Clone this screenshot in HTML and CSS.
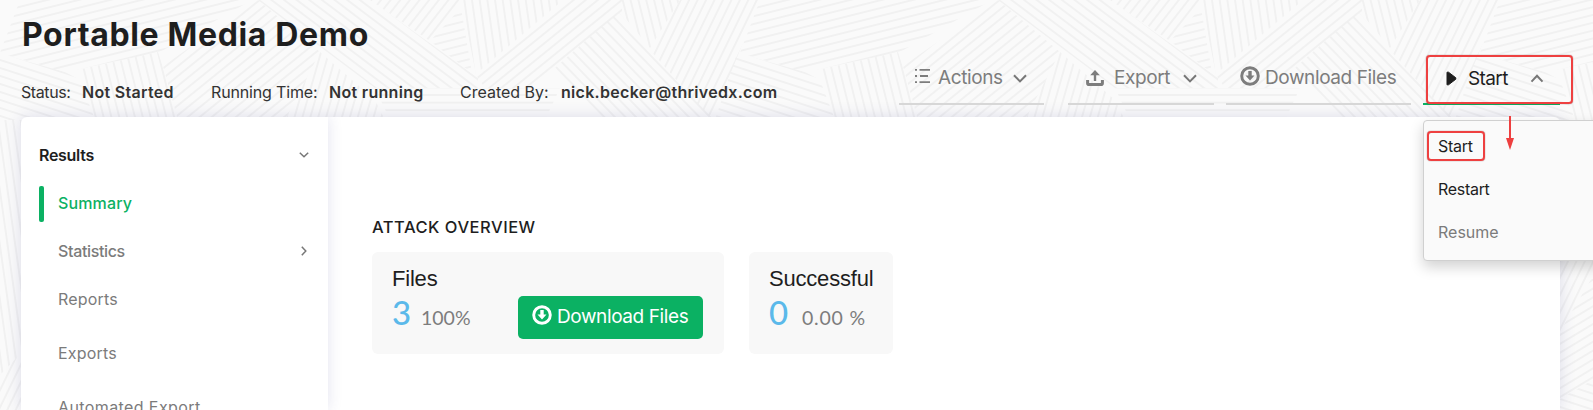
FILE: index.html
```html
<!DOCTYPE html>
<html lang="en">
<head>
<meta charset="utf-8">
<title>Portable Media Demo</title>
<link rel="stylesheet" href="styles.css">
</head>
<body>
<svg class="backdrop" width="1593" height="410" aria-hidden="true">
  <defs>
    <pattern id="h" width="20" height="7.6" patternUnits="userSpaceOnUse"><path d="M0 3.8H20"/></pattern>
    <pattern id="n15" href="#h" patternTransform="rotate(-14)"/>
    <pattern id="p17" href="#h" patternTransform="rotate(18)"/>
    <pattern id="p75" href="#h" patternTransform="rotate(76)"/>
    <pattern id="n40" href="#h" patternTransform="rotate(-39)"/>
    <pattern id="p38" href="#h" patternTransform="rotate(37)"/>
    <pattern id="n50" href="#h" patternTransform="rotate(-52)"/>
    <pattern id="p82" href="#h" patternTransform="rotate(82)"/>
    <pattern id="p45" href="#h" patternTransform="rotate(46)"/>
    <pattern id="n65" href="#h" patternTransform="rotate(-64)"/>
    <pattern id="n75" href="#h" patternTransform="rotate(-74)"/>
    <pattern id="n30" href="#h" patternTransform="rotate(-31)"/>
    <g id="tile">
      <path fill="url(#n15)" d="M20 0H252L160 52L65 72L0 53Z"/>
      <path fill="url(#p17)" d="M-3 53L65 72L80 80L95 120H-25Z"/>
      <path fill="url(#p75)" d="M78 70L158 52L180 120H92Z"/>
      <path fill="url(#n40)" d="M163 66L258 0L320 52L285 120H178Z"/>
      <path fill="url(#p38)" d="M258 0H370L478 78V88H375Z"/>
      <path fill="url(#n50)" d="M370 0H461L430 41Z"/>
      <path fill="url(#n15)" d="M430 41L461 8L472 73Z"/>
      <path fill="url(#p82)" d="M461 0H563L476 74Z"/>
      <path fill="url(#n40)" d="M476 75L565 0H622V12L533 88H485Z"/>
      <path fill="url(#p75)" d="M622 0H680L650 48L622 14Z"/>
      <path fill="url(#p45)" d="M555 68L618 12L715 120H600Z"/>
      <path fill="url(#n65)" d="M680 0H760L712 120L650 50Z"/>
      <path fill="url(#h)" d="M375 88H560L545 120H390Z"/>
      <path fill="url(#n75)" d="M285 120L320 52L375 100L385 120Z"/>
    </g>
  </defs>
  <use href="#tile"/><use href="#tile" x="740"/><use href="#tile" x="1480"/>
  <path fill="url(#p82)" d="M0 120H24V350L0 375Z"/>
  <path fill="url(#n65)" d="M0 375L24 350V410H0Z"/>
  <path fill="url(#n65)" d="M1558 120H1593V276L1558 335Z"/>
  <path fill="url(#n30)" d="M1558 335L1593 276V380L1558 400Z"/>
  <path fill="url(#p17)" d="M1558 400L1593 380V410H1558Z"/>
</svg>

<header class="header">
  <div class="heading">
    <h1 class="title">Portable Media Demo</h1>
    <div class="meta">
      <div class="pair pair-status"><span class="label">Status:</span><b>Not Started</b></div>
      <div class="pair pair-time"><span class="label">Running Time:</span><b>Not running</b></div>
      <div class="pair pair-author"><span class="label">Created By:</span><b>nick.becker@thrivedx.com</b></div>
    </div>
  </div>
  <nav class="toolbar">
    <button class="tool tool-actions">
      <svg class="list" width="16" height="16" viewBox="0 0 16 16" stroke="currentColor" stroke-width="1.8" fill="none"><path d="M0 1.8H2M4.500 1.800H15M0 8H2M5 8H13M0 14.200H2M4.500 14.200H15"/></svg>
      <span>Actions</span>
      <svg class="chev" width="14" height="9" viewBox="0 0 14 9"><path d="M1 1.200L7 7.400L13 1.200"/></svg>
    </button>
    <button class="tool tool-export">
      <svg width="18" height="17" viewBox="0 0 18 17" fill="none" stroke="currentColor"><path stroke-width="2.400" d="M9 11V3"/><path fill="currentColor" stroke="none" d="M9 0L13.800 5.200H4.200Z"/><path stroke-width="3" d="M1.600 10V13.200Q1.600 14.500 3 14.500H15Q16.400 14.500 16.400 13.200V10"/></svg>
      <span>Export</span>
      <svg class="chev" width="14" height="9" viewBox="0 0 14 9"><path d="M1 1.200L7 7.400L13 1.200"/></svg>
    </button>
    <button class="tool tool-download">
      <svg class="ring" width="20" height="20" viewBox="0 0 20 20"><circle cx="10" cy="10" r="8.300" fill="none" stroke="currentColor" stroke-width="2.900"/><path fill="currentColor" d="M8.300 5H11.700V9.500H14.500L10 14.500L5.500 9.500H8.300Z"/></svg>
      <span>Download Files</span>
    </button>
    <button class="tool tool-start">
      <svg width="11" height="15" viewBox="0 0 11 15"><path fill="currentColor" stroke="currentColor" stroke-linejoin="round" d="M1 1.200H2.500L9.800 6.800V8.200L2.500 13.800H1Z"/></svg>
      <span>Start</span>
      <svg class="chev" width="14" height="9" viewBox="0 0 14 9"><path d="M1.500 7.600L7 1.700L12.500 7.600"/></svg>
    </button>
  </nav>
</header>

<main class="panel">
  <aside class="sidebar">
    <div class="group"><span>Results</span><svg class="mini" width="10" height="6" viewBox="0 0 10 6"><path d="M.8.800L5 4.800L9.200.800"/></svg></div>
    <a class="item active"><span>Summary</span></a>
    <a class="item stats"><span>Statistics</span><svg class="mini" width="6" height="10" viewBox="0 0 6 10"><path d="M.8.800L4.800 5L.8 9.200"/></svg></a>
    <a class="item"><span>Reports</span></a>
    <a class="item tall"><span>Exports</span></a>
    <a class="item tall auto"><span>Automated Export</span></a>
  </aside>
  <section class="content">
    <h2 class="section-title">ATTACK OVERVIEW</h2>
    <div class="cards">
      <div class="card card-files">
        <div>
          <div class="card-name name-files">Files</div>
          <div class="figures"><span class="count">3</span><span class="percent">100%</span></div>
        </div>
        <button class="primary">
          <svg class="ring" width="20" height="20" viewBox="0 0 20 20"><circle cx="10" cy="10" r="8.300" fill="none" stroke="currentColor" stroke-width="2.900"/><path fill="currentColor" d="M8.300 5H11.700V9.500H14.500L10 14.500L5.500 9.500H8.300Z"/></svg>
          <span>Download Files</span>
        </button>
      </div>
      <div class="card card-success">
        <div class="card-name">Successful</div>
        <div class="figures"><span class="count zero">0</span><span class="percent decimal">0.00 %</span></div>
      </div>
    </div>
  </section>
</main>

<div class="menu">
  <a class="option">Start</a>
  <a class="option restart">Restart</a>
  <a class="option resume">Resume</a>
</div>
<div class="mark mark-button"></div>
<div class="mark mark-option"></div>
<svg class="arrow" width="10" height="36" viewBox="0 0 10 36"><path stroke="#ee3f3f" stroke-width="2" d="M5 0V24"/><path fill="#ee3f3f" d="M1 22H9L5 34Z"/></svg>
</body>
</html>
```

FILE: styles.css
```css
* { box-sizing: border-box; }
html, body { margin: 0; height: 410px; overflow: hidden; }
body { position: relative; background: #fafafa; font-family: Inter, sans-serif; color: #1e1e1e; white-space: nowrap; }
button { font: inherit; color: inherit; letter-spacing: inherit; background: none; border: 0; padding: 0; margin: 0; white-space: nowrap; }
svg { display: block; flex: none; }
.backdrop { position: absolute; left: 0; top: 0; z-index: -1; }
.backdrop pattern path { stroke: #f1f1f1; stroke-width: 1.8; }

.header { display: flex; justify-content: space-between; height: 117px; padding: 0 33px 0 21px; }
.title { margin: 15px 0 0 1px; font-size: 32px; line-height: 40px; font-weight: 700; letter-spacing: .65px; }
.meta { display: flex; margin-top: 27px; font-size: 16px; line-height: 20px; color: #333; letter-spacing: -.4px; }
.meta b { font-weight: 600; letter-spacing: .3px; }
.pair { display: flex; }
.pair-status { width: 190px; }
.pair-time { width: 249px; letter-spacing: -.15px; }
.pair-author { letter-spacing: 0; }
.pair-status .label { width: 61px; }
.pair-time .label { width: 118px; }
.pair-author .label { width: 101px; }

.toolbar { display: flex; padding-top: 57px; height: 105px; font-size: 19px; letter-spacing: -.4px; color: #7d7d7d; }
.tool { display: flex; align-items: center; height: 48px; padding-bottom: 4px; border-bottom: 2px solid #d7d7d7; line-height: 24px; }
.chev, .mini { fill: none; stroke: #777; stroke-width: 2; }
.mini { stroke-width: 1.5; }
.list, .ring { margin-bottom: 4px; }
.tool-actions { width: 145px; padding-left: 16px; margin-right: 24px; }
.tool-actions > span { width: 75px; margin-left: 7px; text-align: left; }
.tool-export { width: 146px; padding-left: 18px; margin-right: 12px; }
.tool-export > span { width: 69px; margin-left: 10px; text-align: left; }
.tool-download { width: 185px; padding-left: 14px; margin-right: 12px; }
.tool-download > span { margin-left: 5px; }
.tool-start { width: 137px; padding-left: 23px; padding-bottom: 3px; color: #1e1e1e; border-color: #0bb163; }
.tool-start > span { width: 62px; margin-left: 11px; text-align: left; letter-spacing: -.6px; }

.panel { display: flex; width: 1539px; height: 293px; margin-left: 21px; background: #fff; border-radius: 6px 6px 0 0; box-shadow: 0 0 16px rgba(60, 60, 140, .16); overflow: hidden; }
.sidebar { width: 307px; padding-top: 14px; font-size: 16px; letter-spacing: .2px; color: #7b7b7b; box-shadow: 0 0 14px rgba(60, 60, 140, .14); }
.group, .item { display: flex; align-items: center; justify-content: space-between; height: 48px; padding: 0 19px 0 37px; }
.group { padding: 0 19px 0 18px; font-weight: 600; color: #1e1e1e; letter-spacing: -.3px; }
.stats { padding-right: 21px; font-weight: 500; letter-spacing: -.35px; }
.active { position: relative; color: #0bb163; font-weight: 500; letter-spacing: .15px; }
.active::before { content: ""; position: absolute; left: 18px; top: 7px; width: 5px; height: 36px; border-radius: 2px; background: #0bb163; }
.tall { height: 54px; padding-top: 6px; }
.auto { letter-spacing: .4px; }

.content { padding: 99px 0 0 44px; }
.section-title { margin: 0; font-size: 16.500px; line-height: 23px; font-weight: 500; letter-spacing: .5px; }
.cards { display: flex; gap: 25px; margin-top: 13px; }
.card { height: 102px; padding: 14px 20px 0; background: #f8f8f8; border-radius: 6px; }
.card-files { display: flex; justify-content: space-between; width: 352px; }
.card-success { width: 144px; }
.card-name { font: 22px/26px "Liberation Sans", sans-serif; letter-spacing: -.2px; }
.figures { display: flex; align-items: baseline; line-height: 40px; font-family: Lato, sans-serif; }
.count { width: 29px; font-size: 33px; font-weight: 500; color: #5bb9ea; }
.zero { width: 33px; }
.percent { font-size: 19.500px; color: #7d7d7d; }
.decimal { letter-spacing: .8px; }
.primary { display: flex; align-items: center; width: 185px; height: 43px; margin: 30px 1px 0 0; padding: 0 0 2px 14px; gap: 5px; border-radius: 5px; background: #0bb163; color: #fff; font-size: 19px; letter-spacing: -.4px; }

.menu { position: absolute; left: 1423px; top: 120px; width: 200px; height: 141px; padding-top: 3px; background: #fafafa; border: 1px solid #d0d0d0; border-radius: 4px; box-shadow: 0 6px 14px rgba(0, 0, 0, .18); font-size: 16px; letter-spacing: -.3px; }
.option { display: flex; align-items: center; height: 43px; padding-left: 14px; }
.resume { color: #7b7b7b; letter-spacing: 0; }
.mark { position: absolute; border: 2px solid #ee4040; border-radius: 4px; box-shadow: 0 0 1px rgba(70, 30, 30, .8); }
.mark-button { left: 1426px; top: 55px; width: 147px; height: 49px; }
.mark-option { left: 1427px; top: 131px; width: 58px; height: 30px; }
.arrow { position: absolute; left: 1505px; top: 116px; }
```
